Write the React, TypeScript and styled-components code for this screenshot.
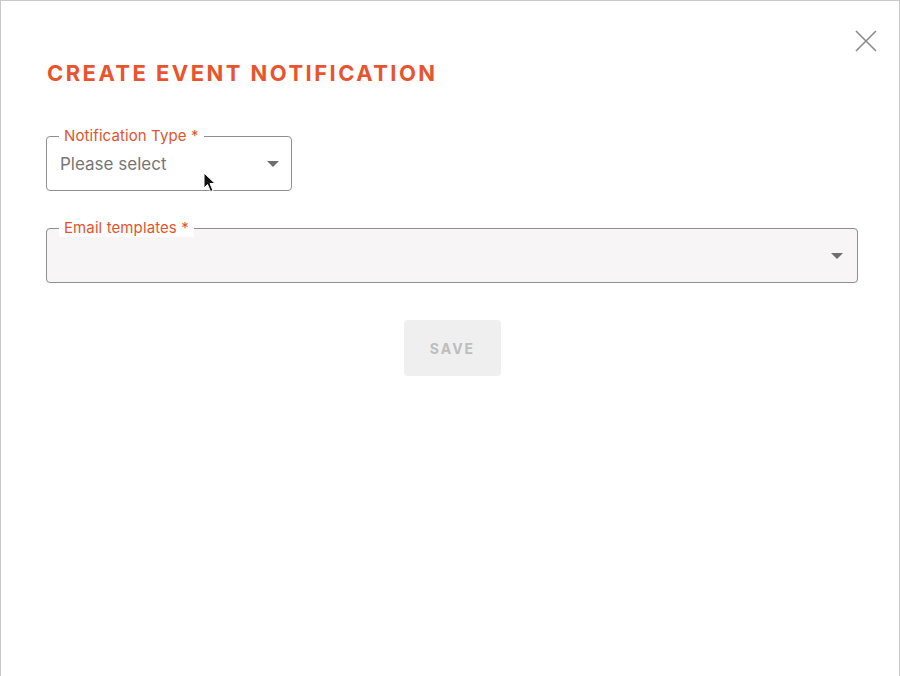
import React from "react";
import styled, { createGlobalStyle } from "styled-components";

const Global = createGlobalStyle`
  html, body { margin: 0; padding: 0; background: #fff; }
  body { font-family: Inter, "Liberation Sans", sans-serif; }
  * { box-sizing: border-box; }
`;

const Dialog = styled.div`
  position: relative;
  width: 900px;
  height: 676px;
  border: 1px solid #c9c9c9;
  border-bottom: none;
  background: #fff;
  padding: 59px 42px 0 45px;
`;

const CloseButton = styled.button`
  position: absolute;
  top: 28px;
  right: 21px;
  width: 24px;
  height: 24px;
  padding: 0;
  border: none;
  background: transparent;
  cursor: pointer;
`;

const Title = styled.h1`
  margin: 0 0 0 1px;
  font-family: Inter, "Liberation Sans", sans-serif;
  font-size: 22px;
  font-weight: 700;
  letter-spacing: 2.45px;
  line-height: 26px;
  color: #e8542e;
  text-transform: uppercase;
`;

const Form = styled.form`
  display: flex;
  flex-direction: column;
  align-items: flex-start;
  margin-top: 41px;
  width: 812px;
`;

const Field = styled.fieldset<{ $width: string; $filled?: boolean }>`
  margin: 0 0 28px 0;
  padding: 0 12px 0 12px;
  width: ${(p) => p.$width};
  border: 1px solid #8f8f8f;
  border-radius: 4px;
  background: ${(p) => (p.$filled ? "#f7f5f5" : "#fff")};
`;

const Legend = styled.legend`
  margin: 0;
  padding: 0 5px;
  background: #fff;
  font-family: Inter, "Liberation Sans", sans-serif;
  font-size: 15px;
  letter-spacing: 0.1px;
  line-height: 18px;
  color: #e0552f;
`;

const Control = styled.div`
  display: flex;
  align-items: center;
  height: 45px;
  padding: 0 1px 8px 1px;
`;

const Value = styled.span`
  font-family: Inter, "Liberation Sans", sans-serif;
  font-size: 17px;
  color: #767676;
`;

const Caret = styled.span<{ $shift?: number }>`
  margin-left: auto;
  margin-right: ${(p) => p.$shift ?? 1}px;
  width: 0;
  height: 0;
  border-left: 6px solid transparent;
  border-right: 6px solid transparent;
  border-top: 6px solid #6f6f6f;
`;

const Actions = styled.div`
  align-self: stretch;
  display: flex;
  justify-content: center;
  margin-top: 9px;
`;

const SaveButton = styled.button`
  width: 97px;
  height: 56px;
  margin-left: 1px;
  border: none;
  border-radius: 4px;
  background: #efefef;
  color: #bdbdbd;
  font-family: Inter, "Liberation Sans", sans-serif;
  font-size: 14px;
  font-weight: 700;
  letter-spacing: 2px;
  text-transform: uppercase;
`;

const Pointer = styled.svg`
  position: absolute;
  left: 202px;
  top: 171px;
  pointer-events: none;
`;

export default function App() {
  return (
    <>
      <Global />
      <Dialog>
        <CloseButton aria-label="Close">
          <svg width="24" height="24" viewBox="0 0 24 24">
            <path d="M2 2 L22 22 M22 2 L2 22" stroke="#8a8a8a" strokeWidth="1.6" fill="none" />
          </svg>
        </CloseButton>
        <Title>Create event notification</Title>
        <Form>
          <Field $width="246px">
            <Legend>Notification Type *</Legend>
            <Control>
              <Value>Please select</Value>
              <Caret $shift={-1} />
            </Control>
          </Field>
          <Field $width="812px" $filled>
            <Legend>Email templates *</Legend>
            <Control>
              <Caret />
            </Control>
          </Field>
          <Actions>
            <SaveButton type="button" disabled>
              Save
            </SaveButton>
          </Actions>
        </Form>
        <Pointer width="14" height="22" viewBox="0 0 14 22">
          <path
            d="M1 1 L1 16 L4.5 12.5 L7.5 19.5 L10 18.5 L7 11.5 L12 11.5 Z"
            fill="#111"
            stroke="#fff"
            strokeWidth="1"
          />
        </Pointer>
      </Dialog>
    </>
  );
}
